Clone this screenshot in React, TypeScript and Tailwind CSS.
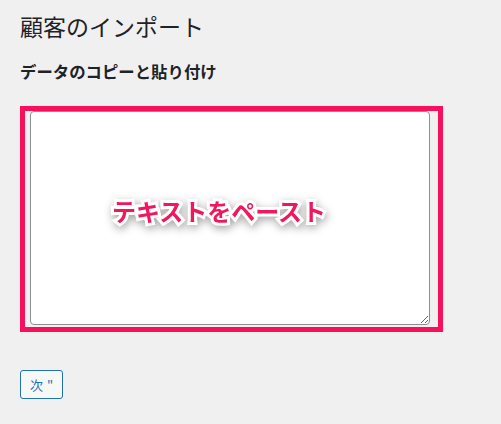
const jp = "font-['Noto_Sans_CJK_JP','Noto_Sans',sans-serif]";

export default function App() {
  return (
    <div className={`min-h-screen bg-[#f0f0f1] pl-[20px] pt-[12px] text-[#1d2327] ${jp}`}>
      {/* Title */}
      <h1 className="text-[23px] leading-[1.3] font-normal">顧客のインポート</h1>

      {/* Section */}
      <h2 className="mt-[17px] text-[16.4px] leading-[24px] font-bold">データのコピーと貼り付け</h2>

      {/* Highlighted paste area */}
      <div className="relative mt-[23px] w-[423px] h-[226px] border-[5px] border-[#f7105c] pl-[5px] pt-[0px]">
        <textarea className="block w-[400px] h-[214px] bg-white border border-[#8c8f94] rounded-[4px] resize-y outline-none" />
        <span className="pointer-events-none absolute left-[87px] top-[84px] text-[24px] leading-[32px] font-bold text-[#f0175c] [paint-order:stroke_fill] [-webkit-text-stroke:6px_white] [filter:drop-shadow(1px_3px_4px_rgba(0,0,0,0.35))]">
          テキストをペースト
        </span>
      </div>

      {/* Next */}
      <button className="mt-[38px] h-[29px] px-[9px] border border-[#2271b1] rounded-[3px] bg-[#f6f7f7] text-[#2271b1] text-[13px] leading-[27px]">
        次<span className="ml-[4px]">"</span>
      </button>
    </div>
  );
}
